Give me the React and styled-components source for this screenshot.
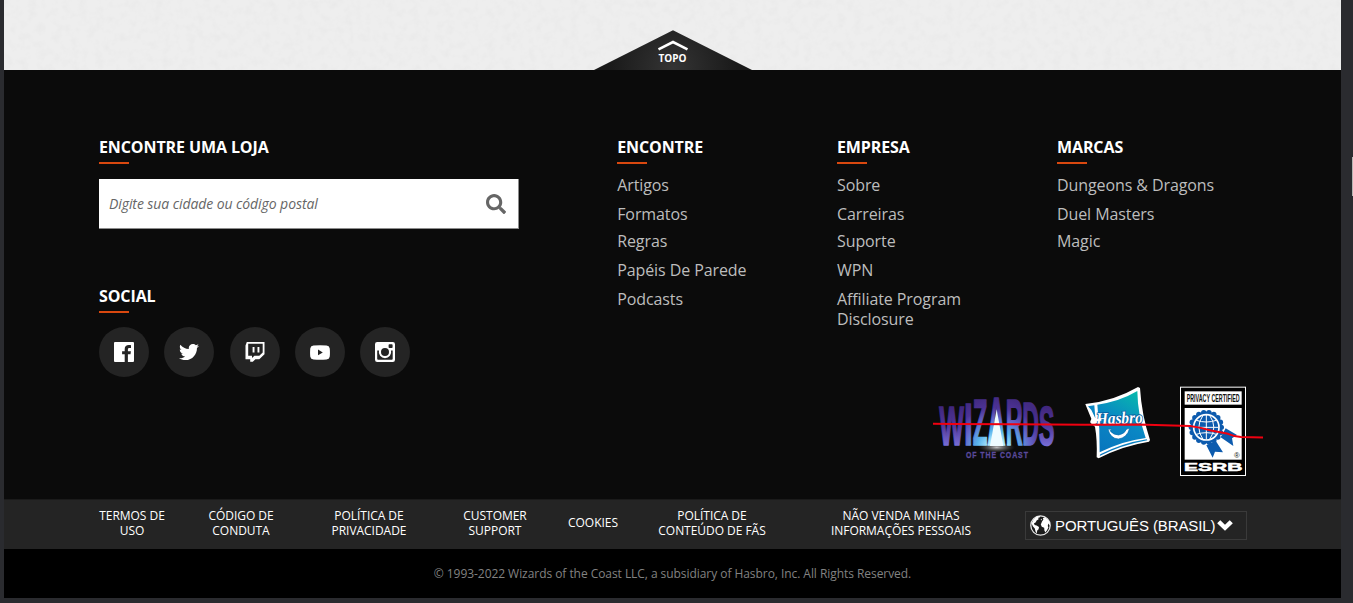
import React from "react";
import styled, { createGlobalStyle } from "styled-components";
import { FaTwitter, FaSearch } from "react-icons/fa";

const GlobalStyle = createGlobalStyle`
  * { box-sizing: border-box; }
  body {
    margin: 0;
    background: #2a2b2f;
    font-family: "Open Sans", "Noto Sans", sans-serif;
    overflow: hidden;
  }
  a { color: inherit; text-decoration: none; }
`;

const Page = styled.div`
  position: relative;
  width: 1353px;
  height: 603px;
  padding: 0 12px 5px 4px;
`;

const ScrollMark = styled.div`
  position: absolute;
  right: 0;
  top: 157px;
  width: 1px;
  height: 39px;
  background: #b5b5b3;
`;

const Paper = styled.div`
  position: relative;
  height: 70px;
  background: #eeeeee;
  display: flex;
  justify-content: center;
  align-items: flex-end;
`;

const Grain = styled.svg`
  position: absolute;
  inset: 0;
  width: 100%;
  height: 100%;
`;

const TopLink = styled.a`
  position: relative;
  width: 160px;
  height: 40px;
  display: flex;
  justify-content: center;
  align-items: flex-end;
  padding-bottom: 5px;
  color: #fff;
  font-size: 10px;
  line-height: 14px;
  font-weight: 700;
  span { position: relative; }
  svg { position: absolute; inset: 0; }
`;

const Main = styled.div`
  height: 429px;
  background: #0b0b0b;
  padding: 66px 0 0 95px;
`;

const Columns = styled.div`
  display: grid;
  grid-template-columns: 518.2px 219.8px 220px 200px;
  height: 251px;
`;

const Heading = styled.h3`
  margin: 0;
  color: #fff;
  font-size: 16px;
  line-height: 22px;
  font-weight: 700;
  letter-spacing: -0.1px;
  white-space: nowrap;
  &::after {
    content: "";
    display: block;
    width: 30px;
    height: 2px;
    margin-top: 4px;
    background: #d9480f;
  }
`;

const SearchBox = styled.div`
  display: flex;
  align-items: center;
  justify-content: space-between;
  width: 420px;
  height: 50px;
  margin: 15px 0 56px;
  padding: 0 12px 0 10px;
  background: #fff;
  border-right: 1px solid #8c8c8c;
  border-bottom: 1px solid #8c8c8c;
  color: #666;
  font-size: 14px;
  font-style: italic;
  letter-spacing: -0.08px;
  svg { margin-top: 1px; }
`;

const SocialRow = styled.div`
  display: flex;
  gap: 15.3px;
  margin-top: 14px;
`;

const SocialLink = styled.a`
  width: 50px;
  height: 50px;
  border-radius: 50%;
  background: #242424;
  color: #fff;
  display: flex;
  align-items: center;
  justify-content: center;
`;

const NavList = styled.ul`
  list-style: none;
  margin: 11px 0 0;
  padding: 0;
  display: flex;
  flex-direction: column;
  gap: 9px;
  color: #bdbdbd;
  font-size: 16px;
  line-height: 20px;
  letter-spacing: -0.09px;
  white-space: nowrap;
  li:nth-child(3) { margin-top: -2px; }
`;

const Logos = styled.div`
  position: relative;
  width: 330px;
  height: 90px;
  margin-left: 834px;
  padding-left: 4px;
  display: flex;
  gap: 25px;
  svg { display: block; flex: none; overflow: visible; }
`;

const Seal = styled.div`
  margin-left: 3px;
`;

const Strike = styled.svg`
  position: absolute;
  left: 0;
  top: 0;
`;

const LegalBar = styled.div`
  height: 50px;
  background: #242424;
  border-top: 1px solid #1b1b1b;
  padding-left: 74px;
  display: grid;
  grid-template-columns: 108px 110px 146px 106px 90px 148px 230px 232px;
  align-items: center;
`;

const LegalLink = styled.a`
  color: #fff;
  font-size: 12px;
  line-height: 15px;
  letter-spacing: -0.04px;
  text-align: center;
  white-space: nowrap;
  padding-bottom: 4px;
`;

const LanguageCell = styled.div`
  padding-left: 9px;
`;

const Language = styled.div`
  display: flex;
  align-items: center;
  width: 222px;
  height: 29px;
  margin-top: 2px;
  padding-left: 4px;
  border: 1px solid #3a3a3a;
  color: #fff;
  font: 15px/20px "Liberation Sans", Arial, sans-serif;
  letter-spacing: -0.1px;
  white-space: nowrap;
  span { margin: 0 2px 0 4px; }
`;

const Copyright = styled.div`
  height: 49px;
  background: #000;
  color: #828282;
  font-size: 12px;
  letter-spacing: -0.055px;
  display: flex;
  align-items: center;
  justify-content: center;
`;

const columns = [
  { title: "ENCONTRE", links: ["Artigos", "Formatos", "Regras", "Papéis De Parede", "Podcasts"] },
  { title: "EMPRESA", links: ["Sobre", "Carreiras", "Suporte", "WPN", ["Affiliate Program", "Disclosure"]] },
  { title: "MARCAS", links: ["Dungeons & Dragons", "Duel Masters", "Magic"] },
];

const legal = [
  ["TERMOS DE", "USO"],
  ["CÓDIGO DE", "CONDUTA"],
  ["POLÍTICA DE", "PRIVACIDADE"],
  ["CUSTOMER", "SUPPORT"],
  ["COOKIES"],
  ["POLÍTICA DE", "CONTEÚDO DE FÃS"],
  ["NÃO VENDA MINHAS", "INFORMAÇÕES PESSOAIS"],
];

const Lines = ({ text }) =>
  [].concat(text).map((t, i) => (
    <React.Fragment key={t}>
      {i > 0 && <br />}
      {t}
    </React.Fragment>
  ));

const Facebook = () => (
  <svg width="20" height="20" viewBox="0 0 20 20" fill="currentColor">
    <path d="M1 0H19Q20 0 20 1V19Q20 20 19 20H13.9V12.3H16.5L16.9 9.3H13.9V7.6C13.9 6.6 14.2 6 15.4 6H17V3.2C16.6 3.1 15.7 3 14.8 3C12.3 3 10.7 4.5 10.7 7V9.3H8.1V12.3H10.7V20H1Q0 20 0 19V1Q0 0 1 0Z" />
  </svg>
);

const Twitch = () => (
  <svg width="20" height="20" viewBox="0 0 20 20" fill="currentColor">
    <path fillRule="evenodd" d="M1.8 0H19.5V12.3L14.3 17.2H10.4L7.8 19.8H5.2V17.2H.5V3.5ZM3.2 1.8V13.7H7V16L9.4 13.7H14.3L17.7 10.5V1.8ZM7.6 5.1H9.5V10.6H7.6ZM12.5 5.1H14.4V10.6H12.5Z" />
  </svg>
);

const Youtube = () => (
  <svg width="20" height="15" viewBox="0 0 20 15" fill="currentColor">
    <path fillRule="evenodd" d="M3.5 .5Q10 0 16.5 .5Q19.3.7 19.7 3.3Q20.2 7.5 19.7 11.7Q19.3 14.2 16.5 14.4Q10 15 3.5 14.4Q.7 14.2 .3 11.7Q-.2 7.5 .3 3.3Q.7 .7 3.5 .5ZM8 4.6V10.2L12.8 7.4Z" />
  </svg>
);

const Instagram = () => (
  <svg width="20" height="20" viewBox="0 0 20 20" fill="currentColor">
    <path fillRule="evenodd" d="M2.2 0H17.8Q20 0 20 2.2V17.8Q20 20 17.8 20H2.2Q0 20 0 17.8V2.2Q0 0 2.2 0ZM14.4 2.2Q13.6 2.2 13.6 3V5.2Q13.6 6 14.4 6H16.8Q17.6 6 17.6 5.2V3Q17.6 2.2 16.8 2.2ZM2.2 8.4V16.8Q2.2 17.7 3.1 17.7H16.8Q17.7 17.7 17.7 16.8V8.4H16A6.2 6.2 0 1 1 4 8.4ZM10 6A4 4 0 1 0 10 14A4 4 0 1 0 10 6Z" />
  </svg>
);

const Globe = () => (
  <svg width="21" height="21" viewBox="0 0 21 21">
    <circle cx="10.5" cy="10.5" r="9.7" fill="#1c1c1c" stroke="#e4e4e4" strokeWidth="1.3" />
    <path fill="#fff" d="M3.6 4.2L7 1.4L10.5 1L9.6 2.4L8.2 2.8L8.6 4.2L6.6 5.6L5.6 7.4L4 8.2L4.6 10L6.6 10.4L9 12L8.6 14.2L7.2 15.6L6.8 18.4L5.6 16.8L4.8 13.4L3 11.4L1.6 8.6ZM12 6.6L13.4 4.4L12.8 3.2L15 2.2L18.4 5L20 8.6L19.6 10.4L18.2 8.6L17.8 11L18.4 12.4L16.8 15.6L15.4 17.4L14.4 15.6L14.2 12.8L11.8 11.8L10.8 9.6ZM10.6 4.2L11.8 3.8L11.6 5.4Z" />
  </svg>
);

const Chevron = () => (
  <svg width="16" height="11" viewBox="0 0 16 11" fill="currentColor">
    <path d="M.4 3L3 .5Q3.3 .2 3.6 .5L8 4.8L12.4 .5Q12.7 .2 13 .5L15.6 3Q15.9 3.3 15.6 3.6L8.3 10.6Q8 10.9 7.7 10.6L.4 3.6Q.1 3.3 .4 3Z" />
  </svg>
);

const wizardLetters = [
  ["W", 58, 74, 78],
  ["I", 132, 26, 67],
  ["Z", 158, 44, 58],
  ["A", 202, 55, 51],
  ["R", 257, 51, 58],
  ["D", 307, 50, 66],
  ["S", 356, 47, 77],
];

const WizardsLogo = () => (
  <svg width="122" height="78" viewBox="51 18 366 234">
    <defs>
      <radialGradient id="wz" gradientUnits="userSpaceOnUse" cx="0" cy="0" r="150" gradientTransform="translate(230 200) scale(1.15 1)">
        <stop offset="0" stopColor="#fff" />
        <stop offset=".13" stopColor="#b5efff" />
        <stop offset=".35" stopColor="#58b3ec" />
        <stop offset=".58" stopColor="#6565c8" />
        <stop offset=".8" stopColor="#4d3396" />
        <stop offset="1" stopColor="#432b83" />
      </radialGradient>
      <linearGradient id="wzSide" gradientUnits="userSpaceOnUse" x1="0" y1="65" x2="0" y2="200">
        <stop offset="0" stopColor="#3c2377" />
        <stop offset=".5" stopColor="#513698" />
        <stop offset="1" stopColor="#7a72dc" />
      </linearGradient>
      <radialGradient id="wzFloor">
        <stop offset="0" stopColor="#fff" stopOpacity=".75" />
        <stop offset="1" stopColor="#777" stopOpacity="0" />
      </radialGradient>
    </defs>
    <ellipse cx="230" cy="199" rx="55" ry="16" fill="url(#wzFloor)" />
    <g fontFamily="Liberation Sans" fontWeight="700">
      {wizardLetters.map(([ch, x, w, top]) => {
        const paint = ch === "W" || ch === "S" ? "url(#wzSide)" : "url(#wz)";
        return (
          <text key={ch} x={x} y="193" fontSize={(191 - top) / 0.688} textLength={w} lengthAdjust="spacingAndGlyphs" fill={paint} stroke={paint} strokeWidth="5">
            {ch}
          </text>
        );
      })}
    </g>
    <path d="M230 85L250 195H210Z" fill="#effcff" />
    <text transform="translate(138 231) scale(.72 1)" fontFamily="Liberation Sans" fontWeight="700" fontSize="29" textLength="258" lengthAdjust="spacing" fill="#5a4a9c" stroke="#5a4a9c" strokeWidth="1">OF THE COAST</text>
  </svg>
);

const HasbroLogo = () => (
  <svg width="68" height="74" viewBox="42 24 204 222">
    <defs>
      <linearGradient id="hb" x1=".8" y1="0" x2=".3" y2="1">
        <stop offset="0" stopColor="#07b9ad" />
        <stop offset=".5" stopColor="#0a86c4" />
        <stop offset="1" stopColor="#0875bd" />
      </linearGradient>
    </defs>
    <path d="M46 75Q130 67 204 24L210 27Q215 108 240 183L237 188Q155 201 86 238L80 235Q82 183 75 143L61 131L64 119L47 78Z" fill="#fff" />
    <path d="M54 82L73 79L76 118L64 93ZM82 77Q150 67 202 36Q203 108 227 177Q160 185 89 220Q90 148 82 77ZM91 226Q158 192 230 181L232 184Q155 198 89 231Z" fill="url(#hb)" />
    <text transform="rotate(-2 142 120)" x="78" y="135" fontFamily="Liberation Serif" fontStyle="italic" fontWeight="700" fontSize="52" textLength="140" lengthAdjust="spacingAndGlyphs" fill="#fff" stroke="#075d9f" strokeWidth="5" paintOrder="stroke">Hasbro</text>
    <path d="M60 127Q66 118 76 120L94 119V125L74 127L72 133Z" fill="#fff" />
    <path d="M114 151Q121 179 145 180Q171 177 179 148L170 150Q164 165 146 168Q130 168 120 155L125 150Z" fill="#fff" stroke="#086cb0" strokeWidth="2" />
  </svg>
);

const scallops = Array.from({ length: 18 }, (_, i) => {
  const a = (i * Math.PI) / 9;
  return [409 + 45 * Math.cos(a), 148 + 45 * Math.sin(a)];
});

const EsrbLogo = () => (
  <svg width="67" height="90" viewBox="330 27 201 270">
    <rect x="331.5" y="27.5" width="195" height="265" fill="#000" stroke="#fff" strokeWidth="3" />
    <rect x="344" y="40" width="171" height="40" fill="#fff" />
    <text x="350" y="72" fontFamily="Liberation Sans" fontWeight="700" fontSize="34" textLength="159" lengthAdjust="spacingAndGlyphs" fill="#111">PRIVACY CERTIFIED</text>
    <rect x="344" y="90" width="171" height="155" fill="#fff" />
    <path d="M409 202L437 188L459 223L435 221L428 239ZM452 178L467 151L501 171L486 181L490 204Z" fill="#0d5bae" />
    <g fill="#0d5bae">
      {scallops.map(([x, y], i) => <circle key={i} cx={x} cy={y} r="8" />)}
      <circle cx="409" cy="148" r="47" />
    </g>
    <circle cx="409" cy="148" r="38" fill="none" stroke="#fff" strokeWidth="5" />
    <path d="M409 111V185M372 148H446M379 127Q409 137 439 127M379 169Q409 159 439 169M399 112Q374 148 399 184M419 112Q444 148 419 184" fill="none" stroke="#fff" strokeWidth="3" />
    <text x="492" y="239" fontFamily="Liberation Sans" fontSize="23" fill="#111">®</text>
    <text x="342" y="278" fontFamily="Liberation Sans" fontWeight="700" fontSize="31" textLength="175" lengthAdjust="spacingAndGlyphs" fill="#fff" stroke="#fff" strokeWidth="1.5">ESRB</text>
  </svg>
);

export default function App() {
  return (
    <Page>
      <GlobalStyle />
      <Paper>
        <Grain>
          <filter id="grain" x="0" y="0" width="100%" height="100%">
            <feTurbulence type="fractalNoise" baseFrequency=".12" numOctaves="3" seed="4" />
            <feColorMatrix values="0 0 0 0 .8  0 0 0 0 .8  0 0 0 0 .8  1.4 0 0 0 -.6" />
          </filter>
          <rect width="100%" height="100%" filter="url(#grain)" />
        </Grain>
        <TopLink href="#">
          <svg width="160" height="40" viewBox="0 0 160 40">
            <defs>
              <radialGradient id="top" gradientUnits="userSpaceOnUse" cx="80" cy="38" r="65">
                <stop offset="0" stopColor="#343434" />
                <stop offset="1" stopColor="#191919" />
              </radialGradient>
            </defs>
            <path d="M1 40L80 .3L159 40Z" fill="url(#top)" />
            <path d="M65.5 19.3L80 12L94.5 19.3" fill="none" stroke="#fff" strokeWidth="2.6" />
          </svg>
          <span>TOPO</span>
        </TopLink>
      </Paper>

      <Main>
        <Columns>
          <div>
            <Heading>ENCONTRE UMA LOJA</Heading>
            <SearchBox>
              <span>Digite sua cidade ou código postal</span>
              <FaSearch size={20} />
            </SearchBox>
            <Heading>SOCIAL</Heading>
            <SocialRow>
              <SocialLink href="#"><Facebook /></SocialLink>
              <SocialLink href="#"><FaTwitter size={20} /></SocialLink>
              <SocialLink href="#"><Twitch /></SocialLink>
              <SocialLink href="#"><Youtube /></SocialLink>
              <SocialLink href="#"><Instagram /></SocialLink>
            </SocialRow>
          </div>
          {columns.map((c) => (
            <div key={c.title}>
              <Heading>{c.title}</Heading>
              <NavList>
                {c.links.map((l) => (
                  <li key={l}><a href="#"><Lines text={l} /></a></li>
                ))}
              </NavList>
            </div>
          ))}
        </Columns>
        <Logos>
          <WizardsLogo />
          <HasbroLogo />
          <Seal><EsrbLogo /></Seal>
          <Strike width="332" height="90" viewBox="0 0 332 90">
            <path d="M0 36.7L20 37L152 37.7L205 37.5L257 39Q268 40.5 278 43.5L295 46.8Q301 49.5 308 50L330 50.5" fill="none" stroke="#f00010" strokeWidth="2" />
          </Strike>
        </Logos>
      </Main>

      <LegalBar>
        {legal.map((l) => (
          <LegalLink key={l.join(" ")} href="#"><Lines text={l} /></LegalLink>
        ))}
        <LanguageCell>
          <Language>
            <Globe />
            <span>PORTUGUÊS (BRASIL)</span>
            <Chevron />
          </Language>
        </LanguageCell>
      </LegalBar>
      <Copyright>© 1993-2022 Wizards of the Coast LLC, a subsidiary of Hasbro, Inc. All Rights Reserved.</Copyright>
      <ScrollMark />
    </Page>
  );
}
